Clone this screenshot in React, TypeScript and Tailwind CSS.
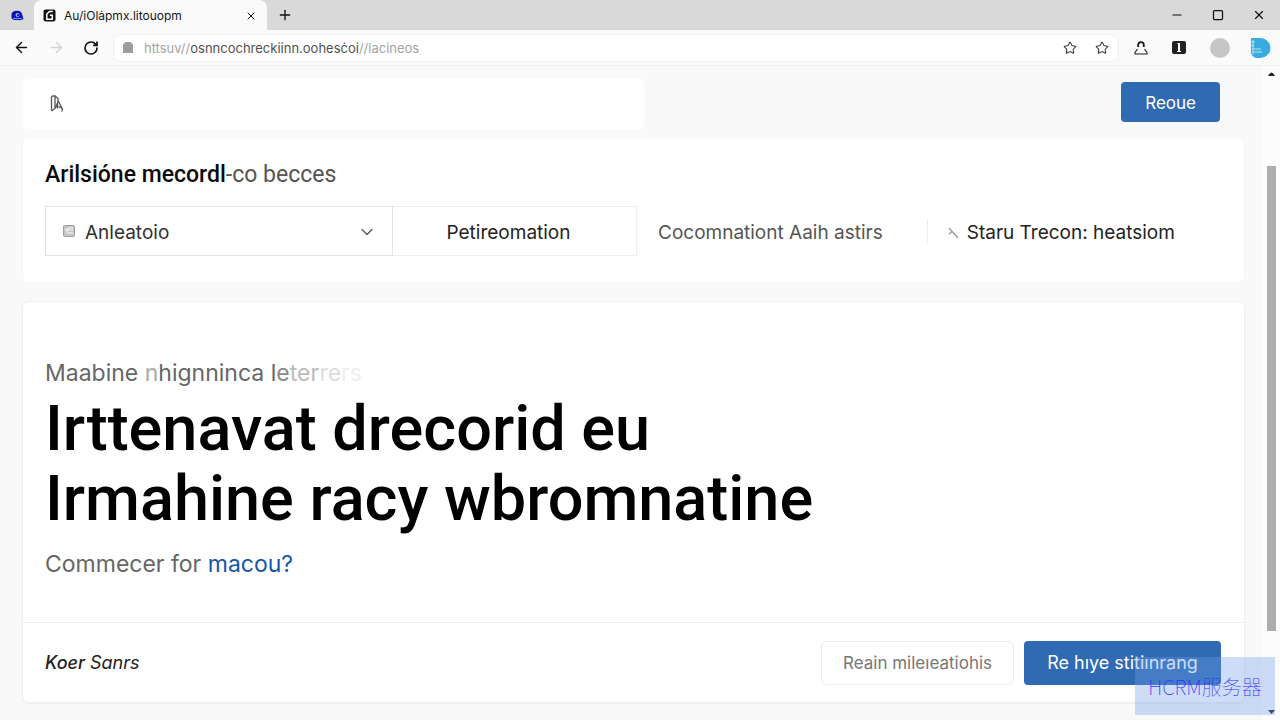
import { ArrowLeft, ArrowRight, ChevronDown, Minus, Plus, RotateCw, Square, Star, X } from "lucide-react";

function TabStrip() {
  return (
    <div className="flex h-[30px] items-end bg-[#d9d9d9]">
      <button aria-label="Browser profile" className="flex h-full w-[34px] items-center justify-center">
        <svg width="13" height="11" viewBox="0 0 13 11" aria-hidden="true">
          <path d="M.5 4.500C.5 2 3 .7 6 .7s5 1.300 5.200 4l1.300 4.300q-2 1.500-5 1H4C1.500 10 0 8 .5 7Z" fill="#1010b4" />
          <path d="M2 8.500h9" stroke="#5ea3e2" strokeWidth="1" />
          <circle cx="6.500" cy="5" r="2" fill="#a9bcfa" />
          <circle cx="7" cy="5.200" r="1.100" fill="#1b1a7c" />
        </svg>
      </button>
      <div className="flex h-full w-[233px] items-center rounded-t-lg bg-[#fafafa] pt-px pr-2 pl-[9px]">
        <svg width="13" height="13" viewBox="0 0 13 13" aria-hidden="true">
          <rect x=".5" y=".5" width="12" height="12" rx="2" fill="#111" />
          <path d="M9.800 2.500H6.500L3.800 5v5.300h5.500V6.300H6.800" fill="none" stroke="#fff" strokeWidth="1.500" />
        </svg>
        <span className="ml-2 flex-1 text-[12px] leading-4 text-[#161616]">Au/iOlȧpmx.litouopm</span>
        <button aria-label="Close tab" className="p-0.5">
          <X size={12} strokeWidth={2} />
        </button>
      </div>
      <button aria-label="New tab" className="flex h-full w-[35px] items-center justify-center">
        <Plus size={16} strokeWidth={2} />
      </button>
      <div className="ml-auto flex h-full items-center gap-7 pr-3.5">
        <button aria-label="Minimize"><Minus size={14} strokeWidth={2} /></button>
        <button aria-label="Maximize"><Square size={12} strokeWidth={2.500} /></button>
        <button aria-label="Close window"><X size={14} strokeWidth={2} /></button>
      </div>
    </div>
  );
}

function Toolbar() {
  return (
    <div className="flex h-9 items-center border-b border-[#f2f2f2] bg-[#fafafa] pr-[9px] pl-[13px]">
      <div className="flex items-center gap-[18px]">
        <button aria-label="Back"><ArrowLeft size={17} strokeWidth={2} /></button>
        <button aria-label="Forward"><ArrowRight size={17} strokeWidth={1.800} className="text-[#d2d2d2]" /></button>
        <button aria-label="Reload"><RotateCw size={16} strokeWidth={2.500} /></button>
      </div>
      <div className="ml-3.5 flex h-7 flex-1 items-center rounded-lg border border-[#f0f0f0] bg-white px-[9px]">
        <svg width="10" height="12" viewBox="0 0 10 12" aria-hidden="true">
          <path d="M2.500 0h5L10 2.500V11H0V2.500Z" fill="#9c9c9c" />
        </svg>
        <p className="ml-[11px] flex-1 text-[13px] leading-4 text-[#a3a3a3]">
          httsuv//<span className="text-[#505050]">osnncochreckiinn.oohesċoi</span>//lacineos
        </p>
        <div className="flex items-center gap-[18px]">
          <button aria-label="Add to favorites"><Star size={14} strokeWidth={1.800} className="text-[#3d3d3d]" /></button>
          <button aria-label="Favorites"><Star size={14} strokeWidth={1.800} className="text-[#3d3d3d]" /></button>
        </div>
      </div>
      <div className="ml-[15px] flex items-center">
        <button aria-label="Security">
          <svg width="14" height="14" viewBox="0 0 14 14" fill="none" stroke="#1a1a1a" aria-hidden="true">
            <path d="M4.200 6V4a2.800 2.800 0 0 1 5.600 0v2" strokeWidth="1.800" />
            <path d="M3.500 8 1 11.500q-.5 1.500.8 1.500h10.400q1.300 0 .8-1.500L10.500 8" strokeWidth="1.100" />
          </svg>
        </button>
        <button aria-label="Reader" className="ml-6">
          <svg width="14" height="13" viewBox="0 0 14 13" aria-hidden="true">
            <rect width="14" height="13" rx="2" fill="#222" />
            <path d="M5.500 2h2.500v8h1v1H5v-1h1V3H5.500Z" fill="#fff" />
          </svg>
        </button>
        <button aria-label="Account" className="ml-6 size-5 rounded-full bg-[#c8c6c5]" />
        <button aria-label="Assistant" className="ml-5">
          <svg width="21" height="20" viewBox="0 0 21 20" aria-hidden="true">
            <path d="M1 0h9.500a10 10 0 0 1 0 20H6Q2 19 1 15Z" fill="#38addd" />
            <path d="M0 4h5M0 7.500h4M2 11h9M3 14h9M3 1.500v15" stroke="#b9e2f4" />
          </svg>
        </button>
      </div>
    </div>
  );
}

function PageHeader() {
  return (
    <header className="flex items-center pr-[25px]">
      <div className="flex h-[50px] w-[52%] items-center rounded-md bg-[#fefefe] pl-7">
        <a href="#home" aria-label="Home">
          <svg width="14" height="18" viewBox="0 0 14 18" fill="none" stroke="#555" strokeWidth="1.300" aria-hidden="true">
            <path d="M1.500 15.500V2.500Q1.500 1 3 1h2l3 2.500v3L5.500 13M5 2v11.500L1.500 16M8 5.500l4.500 8.500M7.500 7v6.500M8.500 12h2.500l1.500 2q0 2-1 2.500" />
          </svg>
        </a>
      </div>
      <button className="-mt-1 ml-auto h-10 rounded bg-[#2f6ab2] px-6 pt-px text-[17px] leading-6 text-white">Reoue</button>
    </header>
  );
}

function FilterCard() {
  return (
    <section className="mt-2 rounded-md border border-[#f5f5f5] bg-white px-[22px] pt-6 pb-[26px] text-[19px]">
      <h2 className="font-['Roboto','Inter',sans-serif] text-[23px] leading-[26px] text-[#555]">
        <span className="font-medium text-[#0b0b0b]">Arilsióne mecordl</span>-co becces
      </h2>
      <div className="mt-[18px] flex items-center">
        <div className="relative w-[348px]">
          <svg className="absolute top-[19px] left-[18px]" width="12" height="12" viewBox="0 0 12 12" aria-hidden="true">
            <rect x=".5" y=".5" width="11" height="11" rx="1" fill="#c4c4c4" stroke="#9f9f9f" />
            <path d="M4 3v5.500M2 5h8M5 8h5M5 3h5" stroke="#fafafa" />
          </svg>
          <select aria-label="Category" className="h-[50px] w-full appearance-none border border-[#e2e2e2] bg-white pt-1 pr-10 pl-[39px] text-[#303030]">
            <option>Anleatoio</option>
          </select>
          <ChevronDown size={20} strokeWidth={1.500} className="pointer-events-none absolute top-4 right-4 text-[#555]" />
        </div>
        <button className="h-[50px] w-[244px] border border-l-0 border-[#eee] pt-1 pr-3 text-[#222]">Petireomation</button>
        <button className="ml-[21px] pt-1 text-[#555]">Cocomnationt Aaih astirs</button>
        <button className="ml-11 flex h-6 items-center border-l border-[#eee] pt-1 pl-5 text-[#222]">
          <svg className="mr-2" width="11" height="12" viewBox="0 0 11 12" fill="none" stroke="#969696" strokeWidth="1.200" aria-hidden="true">
            <path d="m1 1 9 10M4 4.500 1 7" />
          </svg>
          Staru Trecon: heatsiom
        </button>
      </div>
    </section>
  );
}

function RecordCard() {
  return (
    <section className="mt-[18px] rounded-md border border-[#f0f0f0] bg-white shadow-xs">
      <div className="h-[320px] px-[22px] pt-[55px] text-[23px] leading-8 text-[#666]">
        <p>
          Maabine <span className="text-[#aaa]">n</span>hignninca l<span className="text-[#888]">e</span>
          <span className="text-[#bbb]">ter</span><span className="text-[#ddd]">re</span><span className="text-[#eee]">rs</span>
        </p>
        <h1 className="mt-[5px] font-['Roboto','Inter',sans-serif] text-[63px] leading-[70px] font-medium text-black">
          Irttenavat drecorid eu<br />Irmahine racy wbromnatine
        </h1>
        <p className="mt-3.5">
          Commecer for <a href="#machine" className="text-[#1556a8]">macou?</a>
        </p>
      </div>
      <footer className="flex h-20 items-center border-t border-[#eee] pr-[23px] pl-[22px] pt-px text-lg">
        <p className="text-[#222] italic"><span className="font-medium">Koer</span> Sanrs</p>
        <button className="ml-auto h-11 w-[193px] rounded-md border border-[#ebebeb] bg-white text-[17px] text-[#777]">Reain mileıeatiohis</button>
        <button className="ml-2.5 h-11 w-[197px] rounded bg-[#2f6ab2] text-white">Re hıye stitiınrang</button>
      </footer>
    </section>
  );
}

function ScrollTrack() {
  return (
    <div className="flex w-[18px] flex-col items-center bg-[#fcfcfc] py-1.5" aria-hidden="true">
      <svg width="7" height="4" viewBox="0 0 7 4"><path d="M0 4Q3.500-3 7 4Z" fill="#222" /></svg>
      <div className="mt-[90px] h-[465px] w-[9px] bg-[#adadad]" />
      <svg className="mt-auto" width="7" height="4" viewBox="0 0 7 4"><path d="M0 0h7L3.500 4Z" fill="#222" /></svg>
    </div>
  );
}

export default function App() {
  return (
    <div className="relative flex min-h-screen flex-col bg-[#f9f9f9] font-['Inter','Noto_Sans_CJK_SC',sans-serif] text-[#111]">
      <TabStrip />
      <Toolbar />
      <div className="flex flex-1">
        <main className="min-w-0 flex-1 pt-[13px] pr-[17px] pb-4 pl-[22px]">
          <PageHeader />
          <FilterCard />
          <RecordCard />
        </main>
        <ScrollTrack />
      </div>
      <div className="absolute right-[5px] bottom-[5px] flex h-[58px] w-[140px] items-center justify-center bg-[#6f9deb]/35 pt-0.5 font-['Noto_Sans_CJK_SC',sans-serif] text-xl font-thin text-[#3030ff]">
        HCRM服务器
      </div>
    </div>
  );
}
